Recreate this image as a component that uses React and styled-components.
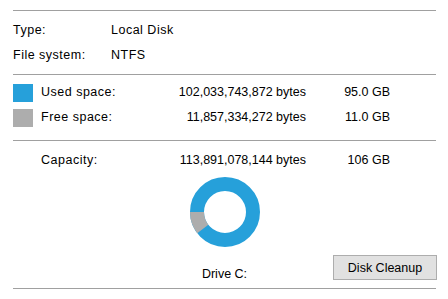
import React from "react";
import styled, { createGlobalStyle } from "styled-components";

const GlobalStyle = createGlobalStyle`
  html, body {
    margin: 0;
    padding: 0;
    background: #ffffff;
  }
  body {
    font-family: "Liberation Sans", Arial, sans-serif;
    font-size: 12.5px;
    color: #000000;
  }
`;

const USED = 102033743872;
const FREE = 11857334272;

function Donut({ size = 70, used, free }) {
  const r = size / 2 - 7;
  const c = 2 * Math.PI * r;
  const freeLen = (c * free) / (used + free);
  const freeAngle = (360 * free) / (used + free);
  return (
    <svg width={size} height={size} viewBox={`0 0 ${size} ${size}`}>
      <circle cx={size / 2} cy={size / 2} r={r} fill="none" stroke="#26a0da" strokeWidth="14" />
      <circle
        cx={size / 2}
        cy={size / 2}
        r={r}
        fill="none"
        stroke="#adadad"
        strokeWidth="14"
        strokeDasharray={`${freeLen} ${c}`}
        transform={`rotate(${180 - freeAngle} ${size / 2} ${size / 2})`}
      />
    </svg>
  );
}

function App() {
  return (
    <>
      <GlobalStyle />
      <Panel>
        <Divider />
        {/* general */}
        <InfoBlock>
          <InfoRow>
            <Label>Type:</Label>
            <Label>Local Disk</Label>
          </InfoRow>
          <InfoRow>
            <Label>File system:</Label>
            <Label>NTFS</Label>
          </InfoRow>
        </InfoBlock>
        <Divider />
        {/* usage */}
        <SpaceBlock>
          <SpaceRow>
            <Swatch $color="#26a0da" />
            <Label>Used space:</Label>
            <Value>102,033,743,872 bytes</Value>
            <Value>95.0 GB</Value>
          </SpaceRow>
          <SpaceRow>
            <Swatch $color="#adadad" />
            <Label>Free space:</Label>
            <Value>11,857,334,272 bytes</Value>
            <Value>11.0 GB</Value>
          </SpaceRow>
        </SpaceBlock>
        <Divider />
        {/* capacity */}
        <CapacityBlock>
          <SpaceRow>
            <span />
            <Label>Capacity:</Label>
            <Value>113,891,078,144 bytes</Value>
            <Value>106 GB</Value>
          </SpaceRow>
          <Chart>
            <Donut used={USED} free={FREE} />
          </Chart>
          <Footer>
            <DriveName>Drive C:</DriveName>
            <CleanupButton>Disk Cleanup</CleanupButton>
          </Footer>
        </CapacityBlock>
        <Divider />
      </Panel>
    </>
  );
}

const Panel = styled.div`
  width: 436px;
  height: 299px;
  padding: 10px 0 0 13px;
  box-sizing: border-box;
  display: flex;
  flex-direction: column;
`;

const Divider = styled.div`
  height: 1px;
  background: #a0a0a0;
  width: 100%;
  flex-shrink: 0;
`;

const InfoBlock = styled.div`
  padding: 7px 0 6px;
`;

const InfoRow = styled.div`
  display: grid;
  grid-template-columns: 98px 1fr;
  height: 25px;
  line-height: 25px;
`;

const Label = styled.span`
  letter-spacing: 0.5px;
  white-space: nowrap;
`;

const Value = styled.span`
  text-align: right;
  white-space: nowrap;
`;

const SpaceBlock = styled.div`
  padding: 5px 0 10px;
`;

const SpaceRow = styled.div`
  display: grid;
  grid-template-columns: 28px 129px 136px 84px;
  align-items: center;
  height: 25px;
  line-height: 25px;
`;

const Swatch = styled.span`
  width: 20px;
  height: 18px;
  background: ${(p) => p.$color};
  margin-top: 1px;
`;

const CapacityBlock = styled.div`
  padding-top: 7px;
  display: flex;
  flex-direction: column;
`;

const Chart = styled.div`
  display: flex;
  justify-content: center;
  margin-top: 4px;
  height: 70px;
`;

const Footer = styled.div`
  display: grid;
  grid-template-columns: 1fr auto 1fr;
  height: 41px;
  padding-top: 8px;
  box-sizing: border-box;
`;

const DriveName = styled.span`
  grid-column: 2;
  align-self: end;
  line-height: 15px;
  padding-bottom: 6px;
`;

const CleanupButton = styled.button`
  grid-column: 3;
  justify-self: end;
  align-self: start;
  width: 104px;
  height: 25px;
  margin-right: -1px;
  padding: 0;
  background: #e1e1e1;
  border: 1px solid #adadad;
  border-radius: 0;
  font-family: "Liberation Sans", Arial, sans-serif;
  font-size: 12.5px;
  color: #000000;
`;

export default App;
